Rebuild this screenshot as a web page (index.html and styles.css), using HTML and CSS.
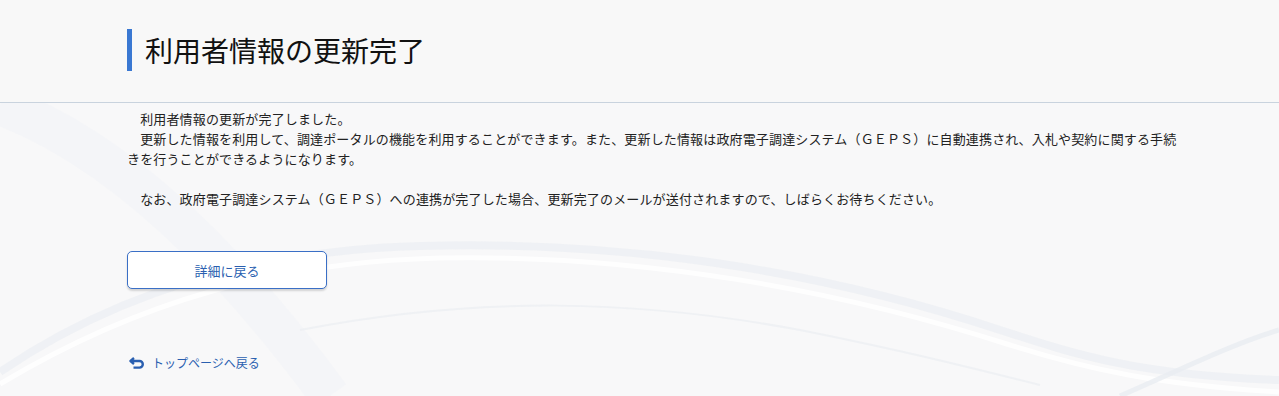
FILE: index.html
```html
<!DOCTYPE html>
<html lang="ja">
  <head>
    <meta charset="utf-8">
    <title>利用者情報の更新完了</title>
    <link rel="stylesheet" href="styles.css">
  </head>
  <body>
    <svg class="bg-waves" viewBox="0 0 1279 396" preserveAspectRatio="none" aria-hidden="true">
      <path d="M0 105 C 120 150 230 260 330 396" fill="none" stroke="#eef1f5" stroke-width="40" opacity="0.35"/>
      <path d="M0 372 C 120 290 260 250 420 246 C 620 240 820 270 1000 330 C 1080 356 1140 375 1279 380" fill="none" stroke="#e9edf2" stroke-width="8" opacity="0.6"/>
      <path d="M0 384 C 140 300 280 262 440 258 C 640 254 840 290 1010 345 C 1090 370 1160 385 1279 392" fill="none" stroke="#ffffff" stroke-width="5" opacity="0.8"/>
      <path d="M300 330 C 480 295 640 300 800 330 C 900 350 960 365 1040 385" fill="none" stroke="#eceff3" stroke-width="2" opacity="0.8"/>
      <path d="M1120 396 C 1180 370 1230 345 1279 330" fill="none" stroke="#e8ecf1" stroke-width="5" opacity="0.8"/>
    </svg>

    <header class="page-head">
      <div class="inner">
        <h1 class="page-title">利用者情報の更新完了</h1>
      </div>
    </header>

    <main class="inner content">
      <p>　利用者情報の更新が完了しました。<br>
      　更新した情報を利用して、調達ポータルの機能を利用することができます。また、更新した情報は政府電子調達システム（ＧＥＰＳ）に自動連携され、入札や契約に関する手続きを行うことができるようになります。</p>
      <p class="note">　なお、政府電子調達システム（ＧＥＰＳ）への連携が完了した場合、更新完了のメールが送付されますので、しばらくお待ちください。</p>

      <div class="actions">
        <button class="btn-back" type="button">詳細に戻る</button>
      </div>

      <a class="top-link" href="#">
        <svg width="16" height="12" viewBox="0 0 16 12">
          <path d="M5 1 L1.5 4 L5 7" fill="none" stroke="#2a5fb0" stroke-width="2.4" stroke-linejoin="round"/>
          <path d="M2 4 H10.5 A3.3 3.3 0 0 1 10.5 10.6 H4.5" fill="none" stroke="#2a5fb0" stroke-width="2.4"/>
        </svg>
        トップページへ戻る
      </a>
    </main>
  </body>
</html>
```

FILE: styles.css
```css
html, body {
  margin: 0;
  padding: 0;
}

body {
  font-family: "Noto Sans CJK JP", "Noto Sans", sans-serif;
  background-color: #f8f8f9;
  color: #1a1a1a;
  position: relative;
  min-height: 396px;
  overflow: hidden;
}

.bg-waves {
  position: absolute;
  left: 0;
  top: 0;
  width: 100%;
  height: 396px;
  z-index: 0;
}

.inner {
  margin-left: 127px;
  width: 1052px;
  position: relative;
  z-index: 1;
}

.page-head {
  position: relative;
  z-index: 1;
  background-color: #f8f8f8;
  border-bottom: 1px solid #c9d3de;
  height: 103px;
  box-sizing: border-box;
  padding-top: 29px;
}

.page-title {
  margin: 0;
  border-left: 5px solid #3a78d2;
  padding-left: 13px;
  height: 42px;
  line-height: 42px;
  font-size: 28px;
  font-weight: normal;
  color: #111;
}

.content {
  padding-top: 6px;
  font-size: 13px;
  line-height: 20px;
  letter-spacing: 0.15px;
  color: #222;
}

.content p {
  margin: 0 0 20px 0;
}

.actions {
  margin-top: 42px;
}

.btn-back {
  width: 200px;
  height: 38px;
  background-color: #fff;
  border: 1px solid #3a6fc6;
  border-radius: 5px;
  color: #2a5fb0;
  font-family: inherit;
  font-size: 13px;
  box-shadow: 0 2px 2px rgba(0, 0, 0, 0.15);
  cursor: pointer;
}

.top-link {
  display: inline-flex;
  align-items: center;
  gap: 7px;
  margin-top: 64px;
  margin-left: 2px;
  color: #2a5fb0;
  font-size: 12px;
  letter-spacing: 0;
  text-decoration: none;
}
```
